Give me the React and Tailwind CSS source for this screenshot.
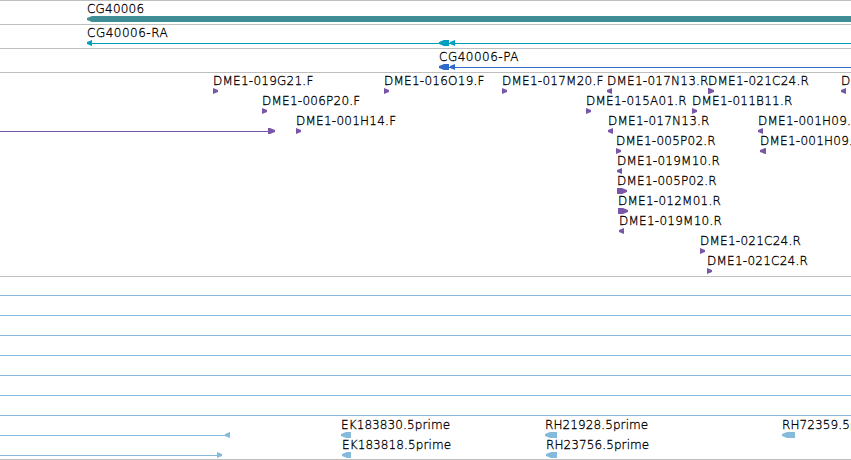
const TEAL = '#3f8e96';
const CYAN = '#009fbf';
const BLUE = '#2f69c9';
const PURPLE = '#7857a8';
const SKY = '#86badb';

const WIDTH = 851;

// every row is a lane of glyphs, x and w are in pixels along the sequence
const clones = [
  [
    { label: 'DME1-019G21.F', x: 213, dir: 'right' },
    { label: 'DME1-016O19.F', x: 384, dir: 'right' },
    { label: 'DME1-017M20.F', x: 502, dir: 'right' },
    { label: 'DME1-017N13.R', x: 607, dir: 'left' },
    { label: 'DME1-021C24.R', x: 708, dir: 'right', w: 6 },
    { label: 'DME1-021C24.R', x: 841, dir: 'left' },
  ],
  [
    { label: 'DME1-006P20.F', x: 262, dir: 'right' },
    { label: 'DME1-015A01.R', x: 586, dir: 'right' },
    { label: 'DME1-011B11.R', x: 692, dir: 'right' },
  ],
  [
    { x: 268, dir: 'right', w: 7, line: [0, 268] },
    { label: 'DME1-001H14.F', x: 296, dir: 'right' },
    { label: 'DME1-017N13.R', x: 608, dir: 'left' },
    { label: 'DME1-001H09.R', x: 758, dir: 'left' },
  ],
  [
    { label: 'DME1-005P02.R', x: 616, dir: 'right' },
    { label: 'DME1-001H09.R', x: 760, dir: 'left', w: 6 },
  ],
  [{ label: 'DME1-019M10.R', x: 617, dir: 'left' }],
  [{ label: 'DME1-005P02.R', x: 617, dir: 'right', w: 10 }],
  [{ label: 'DME1-012M01.R', x: 618, dir: 'right', w: 10 }],
  [{ label: 'DME1-019M10.R', x: 619, dir: 'left' }],
  [{ label: 'DME1-021C24.R', x: 700, dir: 'right' }],
  [{ label: 'DME1-021C24.R', x: 707, dir: 'right' }],
];

const ests = [
  [
    { x: 225, dir: 'left', line: [0, 225] },
    { label: 'EK183830.5prime', x: 341, dir: 'left', w: 10 },
    { label: 'RH21928.5prime', x: 545, dir: 'left', w: 12 },
    { label: 'RH72359.5prime', x: 782, dir: 'left', w: 13 },
  ],
  [
    { x: 217, dir: 'right', line: [0, 217] },
    { label: 'EK183818.5prime', x: 342, dir: 'left', w: 9 },
    { label: 'RH23756.5prime', x: 546, dir: 'left', w: 11 },
  ],
];

const gene = [{ label: 'CG40006', x: 87, dir: 'left', w: WIDTH - 87 }];

const mrna = [
  { label: 'CG40006-RA', x: 87, dir: 'left', line: [91, WIDTH] },
  { x: 439, dir: 'left', w: 10 },
  { x: 450, dir: 'left' },
];

const cds = [
  { label: 'CG40006-PA', x: 439, dir: 'left', w: 10, line: [448, WIDTH] },
  { x: 450, dir: 'left' },
];

function Arrow({ x, w = 5, dir, color }) {
  const tip = dir === 'left' ? x : x + w;
  const neck = dir === 'left' ? x + 5 : x + w - 5;
  const tail = dir === 'left' ? x + w : x;
  return (
    <polygon
      points={`${tip},17 ${neck},15 ${tail},15 ${tail},21 ${neck},21 ${tip},19`}
      fill={color}
    />
  );
}

function Lane({ items, color }) {
  return (
    <div className="relative h-5">
      <svg className="block h-[22px] w-full overflow-visible">
        {items.map((f, i) => (
          <g key={i}>
            {f.line && (
              <rect x={f.line[0]} y="18" width={f.line[1] - f.line[0]} height="1" fill={color} />
            )}
            <Arrow x={f.x} w={f.w} dir={f.dir} color={color} />
          </g>
        ))}
      </svg>
      {items.map((f, i) =>
        f.label ? (
          <span
            key={i}
            className="absolute top-0 whitespace-nowrap text-[12px] leading-4 [-webkit-text-stroke:0.3px_black]"
            style={{ left: f.x }}
          >
            {f.label}
          </span>
        ) : null
      )}
    </div>
  );
}

function Track({ className, lanes = [], color }) {
  return (
    <div className={`shrink-0 border-t ${className}`}>
      {lanes.map((items, i) => <Lane key={i} items={items} color={color} />)}
    </div>
  );
}

export default function App() {
  return (
    <div className="flex h-[460px] w-[851px] flex-col overflow-hidden bg-white font-['DejaVu_Sans',sans-serif] font-extralight text-black">
      <Track className="h-6 border-[#bebebe] tracking-[0.2px]" lanes={[gene]} color={TEAL} />
      <Track className="h-6 border-[#bebebe] tracking-[0.5px]" lanes={[mrna]} color={CYAN} />
      <Track className="h-6 border-[#bebebe] tracking-[0.5px]" lanes={[cds]} color={BLUE} />
      <Track className="h-[204px] border-[#bebebe] tracking-[0.25px]" lanes={clones} color={PURPLE} />
      <Track className="h-[19px] border-[#bebebe]" />
      {[0, 1, 2, 3, 4, 5].map((i) => (
        <Track key={i} className="h-5 border-[#86badb]" />
      ))}
      <Track className="h-11 border-[#86badb] pt-px tracking-[0.1px]" lanes={ests} color={SKY} />
      <Track className="h-px border-[#bebebe]" />
    </div>
  );
}
